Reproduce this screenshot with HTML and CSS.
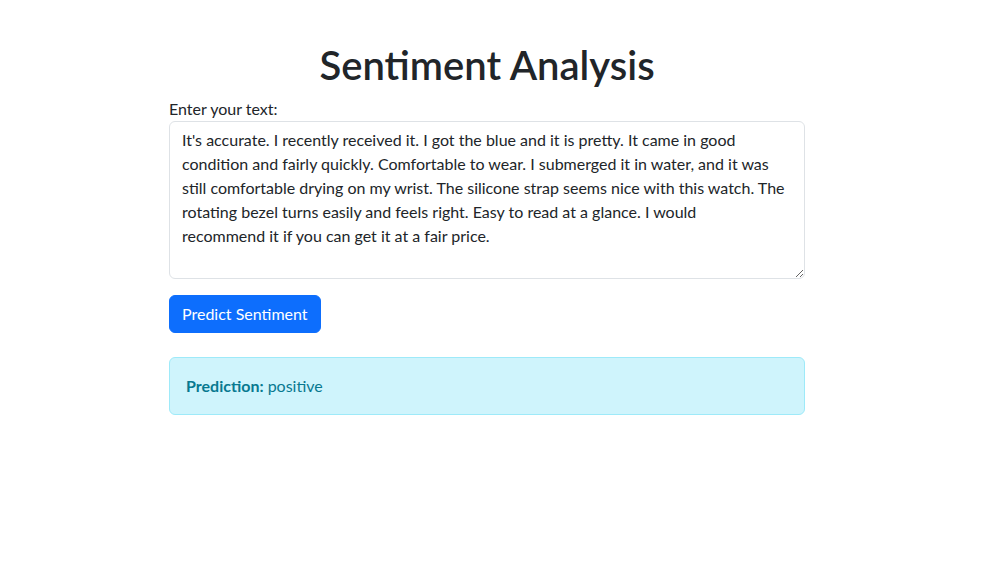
FILE: index.html
```html
<!DOCTYPE html>
<html lang="en">
<head>
<meta charset="utf-8">
<title>Sentiment Analysis</title>
<link rel="stylesheet" href="styles.css">
</head>
<body>
<main class="container">
  <h1 class="title">Sentiment Analysis</h1>
  <form class="form">
    <label class="label" for="text">Enter your text:</label>
    <textarea class="input" id="text" rows="6">It's accurate. I recently received it. I got the blue and it is pretty. It came in good condition and fairly quickly. Comfortable to wear. I submerged it in water, and it was still comfortable drying on my wrist. The silicone strap seems nice with this watch. The rotating bezel turns easily and feels right. Easy to read at a glance. I would
recommend it if you can get it at a fair price.</textarea>
    <button class="btn" type="button">Predict Sentiment</button>
  </form>
  <div class="alert"><strong>Prediction:</strong> positive</div>
</main>
</body>
</html>
```
FILE: styles.css
```css
* { box-sizing: border-box; }
body {
  margin: 0;
  padding-right: 19px;
  font-family: "Lato", "Open Sans", sans-serif;
  font-size: 16px;
  line-height: 24px;
  color: #212529;
  background: #fff;
}
.container {
  width: 636px;
  margin: 0 auto;
}
.title {
  margin: 41px 0 8px;
  font-size: 40px;
  line-height: 48px;
  font-weight: 600;
  text-align: center;
  color: #212529;
}
.form {
  display: flex;
  flex-direction: column;
  align-items: flex-start;
}
.label {
  display: block;
  line-height: 24px;
}
.input {
  display: block;
  width: 100%;
  height: 158px;
  padding: 6px 12px;
  font: inherit;
  line-height: 24px;
  color: #212529;
  border: 1px solid #dee2e6;
  border-radius: 6px;
  background: #fff;
  resize: vertical;
  outline: none;
}
.btn {
  margin-top: 16px;
  padding: 6px 12px;
  font: inherit;
  line-height: 24px;
  color: #fff;
  background: #0d6efd;
  border: 1px solid #0d6efd;
  border-radius: 6px;
  cursor: pointer;
}
.alert {
  margin-top: 24px;
  padding: 16px;
  color: #087990;
  background: #cff4fc;
  border: 1px solid #9eeaf9;
  border-radius: 6px;
}
.alert strong { font-weight: 700; }
```
